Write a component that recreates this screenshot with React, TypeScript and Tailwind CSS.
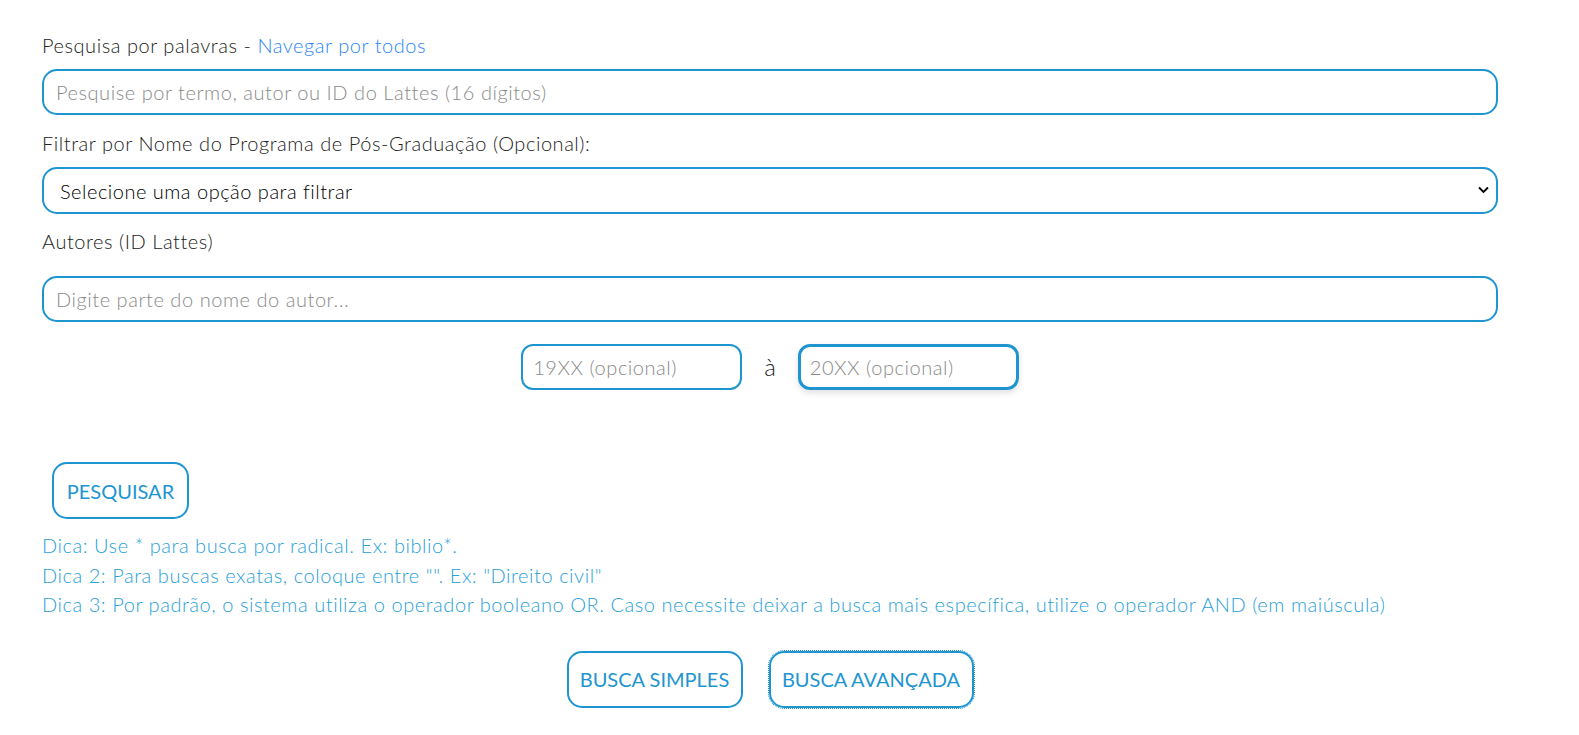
import React from "react";

const inputCls =
  "w-full h-[46px] rounded-[15px] border-2 border-[#1e95d0] bg-white px-[12px] text-[20px] tracking-[0.55px] text-[#333] placeholder:text-[#8a8a8a] outline-none";

export default function App() {
  return (
    <div className="min-h-[735px] bg-white font-['Lato','Open_Sans',sans-serif] font-light">
      <div className="pl-[42px] pr-[81px] pt-[32px]">
        <div className="text-[20px] tracking-[0.55px] leading-[27px] text-[#222]">
          Pesquisa por palavras - <a className="text-[#2a85f5]">Navegar por todos</a>
        </div>
        <input className={`${inputCls} mt-[10px]`} placeholder="Pesquise por termo, autor ou ID do Lattes (16 dígitos)" />
        <div className="mt-[15px] text-[20px] tracking-[0.55px] leading-[27px] text-[#222]">
          Filtrar por Nome do Programa de Pós-Graduação (Opcional):
        </div>
        <div className="relative mt-[10px]">
          <select className="w-full h-[47px] appearance-none rounded-[15px] border-2 border-[#1e95d0] bg-white pl-[16px] text-[20px] font-light tracking-[0.5px] text-black outline-none">
            <option>Selecione uma opção para filtrar</option>
          </select>
          <svg className="pointer-events-none absolute right-[9px] top-[19px]" width="11" height="8" viewBox="0 0 11 8">
            <path d="M1 1.5 L5.5 6 L10 1.5" fill="none" stroke="#000" strokeWidth="1.8" />
          </svg>
        </div>
        <div className="mt-[14px] text-[20px] tracking-[0.55px] leading-[27px] text-[#222]">Autores (ID Lattes)</div>
        <input className={`${inputCls} mt-[21px]`} placeholder="Digite parte do nome do autor..." />
        <div className="mt-[22px] flex items-center justify-center gap-[22px]">
          <input className="h-[46px] w-[221px] rounded-[12px] border-2 border-[#1e95d0] px-[10px] text-[20px] tracking-[0.55px] placeholder:text-[#8a8a8a] outline-none" placeholder="19XX (opcional)" />
          <span className="text-[24px] text-[#212529]">à</span>
          <input className="h-[46px] w-[221px] rounded-[12px] border-[3px] border-[#1e95d0] px-[9px] text-[20px] tracking-[0.55px] shadow-[0_3px_6px_rgba(0,0,0,0.12)] placeholder:text-[#8a8a8a] outline-none" placeholder="20XX (opcional)" />
        </div>
        <div className="mt-[72px] pl-[10px]">
          <button className="h-[57px] w-[137px] rounded-[15px] border-2 border-[#1e95d0] bg-white text-[20px] font-normal text-[#1e95d0]">
            PESQUISAR
          </button>
        </div>
        <div className="mt-[12px] text-[20px] tracking-[0.55px] leading-[29.5px] text-[#2a9fd9]">
          <div>Dica: Use * para busca por radical. Ex: biblio*.</div>
          <div>Dica 2: Para buscas exatas, coloque entre "". Ex: "Direito civil"</div>
          <div>
            Dica 3: Por padrão, o sistema utiliza o operador booleano OR. Caso necessite deixar a busca mais específica, utilize o operador AND (em maiúscula)
          </div>
        </div>
        <div className="mt-[31px] flex justify-center gap-[26px]">
          <button className="h-[57px] w-[176px] rounded-[15px] border-2 border-[#1e95d0] bg-white text-[20px] font-normal text-[#1e95d0]">
            BUSCA SIMPLES
          </button>
          <button className="h-[57px] w-[205px] rounded-[15px] border-2 border-[#1e95d0] bg-white text-[20px] font-normal text-[#1e95d0] outline-1 outline-dotted outline-[#1e95d0]">
            BUSCA AVANÇADA
          </button>
        </div>
      </div>
    </div>
  );
}
